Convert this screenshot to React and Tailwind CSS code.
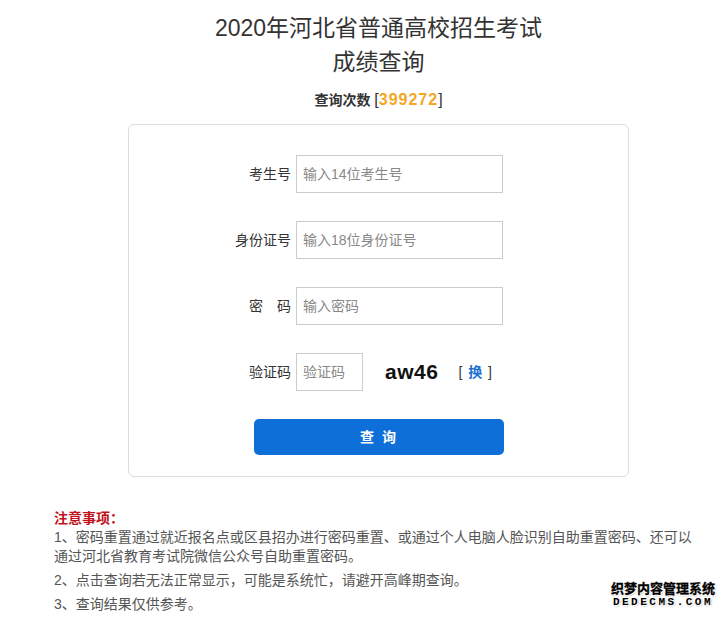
const FONT = { fontFamily: '"Liberation Sans", "Noto Sans CJK SC", sans-serif' };

function Field({ label, placeholder, narrow }) {
  return (
    <div className="flex items-center">
      <label className="w-[167px] pr-[5px] text-right text-[14px] text-[#333]">{label}</label>
      <input
        placeholder={placeholder}
        className={`${narrow ? 'w-[67px]' : 'w-[207px]'} h-[38px] border border-[#ccc] px-[6px] text-[14px] text-[#333] placeholder:text-[#888] outline-none`}
      />
    </div>
  );
}

export default function App() {
  return (
    <div style={FONT} className="relative w-[725px] h-[619px] overflow-hidden bg-white">
      <div className="pl-[128px] w-[629px]">
        <h1 className="pt-[11px] text-center text-[23px] leading-[34px] text-[#333]">
          2020年河北省普通高校招生考试
          <br />
          成绩查询
        </h1>
        <p className="mt-[12px] text-center text-[14px] font-bold text-[#333] leading-[18px]">
          查询次数 <span className="text-[16px] font-normal">[<span className="font-bold tracking-[1px] text-[#f5a623]">399272</span>]</span>
        </p>

        <div className="mt-[15px] h-[353px] rounded-[6px] border border-[#ddd] pt-[30px]">
          <div className="flex flex-col gap-[28px]">
            <Field label="考生号" placeholder="输入14位考生号" />
            <Field label="身份证号" placeholder="输入18位身份证号" />
            <Field label="密　码" placeholder="输入密码" />
            <div className="flex items-center">
              <Field label="验证码" placeholder="验证码" narrow />
              <span className="ml-[22px] text-[21px] font-bold text-[#111] tracking-[0.5px]">aw46</span>
              <span className="ml-[20px] text-[14px] text-[#333] tracking-[1px]">
                [ <span className="font-bold text-[#1a6fd4]">换</span> ]
              </span>
            </div>
          </div>
          <button className="ml-[125px] mt-[28px] h-[36px] w-[250px] rounded-[5px] bg-[#0e6fd8] text-[14px] font-bold text-white tracking-[2px]">
            查 询
          </button>
        </div>
      </div>

      <div className="pl-[54px] mt-[32px] w-[704px] text-[14px] leading-[19px] text-[#555]">
        <p className="font-bold text-[#c0111b]">注意事项：</p>
        <p>1、密码重置通过就近报名点或区县招办进行密码重置、或通过个人电脑人脸识别自助重置密码、还可以通过河北省教育考试院微信公众号自助重置密码。</p>
        <p className="mt-[5px]">2、点击查询若无法正常显示，可能是系统忙，请避开高峰期查询。</p>
        <p className="mt-[5px]">3、查询结果仅供参考。</p>
      </div>

      <div className="absolute right-[10px] top-[582px] flex flex-col items-center leading-none">
        <span className="text-[13px] font-bold text-black [-webkit-text-stroke:0.3px_#000] [text-shadow:1px_1px_0_#fff,-1px_-1px_0_#fff,1px_-1px_0_#fff,-1px_1px_0_#fff,1px_1px_2px_#888]">织梦内容管理系统</span>
        <span className="mt-[2px] text-[11px] font-bold tracking-[2.5px] text-black [text-shadow:1px_1px_0_#fff,-1px_-1px_0_#fff,1px_1px_2px_#888]" style={{ fontFamily: '"Liberation Mono", monospace' }}>DEDECMS.COM</span>
      </div>
    </div>
  );
}
